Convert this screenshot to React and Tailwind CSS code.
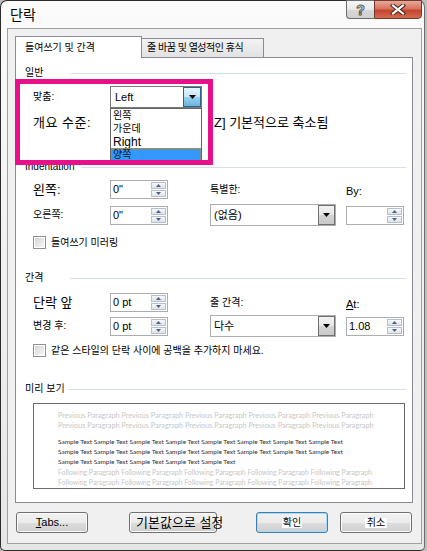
import React from "react";

const F = "font-['Liberation_Sans','Noto_Sans_CJK_KR',sans-serif]";

function TriDown({ color = "#000", w = 7, h = 4 }) {
  return (
    <svg width={w} height={h} viewBox="0 0 7 4">
      <path d="M0 0 L7 0 L3.5 4 Z" fill={color} />
    </svg>
  );
}
function TriUp({ color = "#4d6185" }) {
  return (
    <svg width="5" height="3" viewBox="0 0 5 3">
      <path d="M0 3 L5 3 L2.5 0 Z" fill={color} />
    </svg>
  );
}
function TriDn({ color = "#4d6185" }) {
  return (
    <svg width="5" height="3" viewBox="0 0 5 3">
      <path d="M0 0 L5 0 L2.5 3 Z" fill={color} />
    </svg>
  );
}

function SpinBox({ value, className = "" }) {
  return (
    <div className={`w-[58px] h-[19px] shrink-0 border border-[#abadb3] bg-white flex items-center ${className}`}>
      <span className="flex-1 pl-[2px] text-[11px] leading-none text-black whitespace-nowrap">{value}</span>
      <div className="w-[16px] h-full flex flex-col gap-px py-px pr-px">
        <div className="flex-1 border border-[#b7bfca] bg-linear-to-b from-[#f7f9fb] to-[#dde3ea] flex items-center justify-center">
          <TriUp />
        </div>
        <div className="flex-1 border border-[#b7bfca] bg-linear-to-b from-[#f7f9fb] to-[#dde3ea] flex items-center justify-center">
          <TriDn />
        </div>
      </div>
    </div>
  );
}

function Combo({ value }) {
  return (
    <div className="w-[126px] h-[22px] shrink-0 border border-[#abadb3] bg-white flex items-center">
      <span className="flex-1 pl-[3px] text-[11px] leading-none text-black whitespace-nowrap">{value}</span>
      <div className="w-[17px] h-[20px] border border-[#707070] bg-[linear-gradient(#f2f2f2_0%,#e6e6e6_50%,#d4d4d4_51%,#c9c9c9_100%)] flex items-center justify-center">
        <TriDown />
      </div>
    </div>
  );
}

function Check({ label }) {
  return (
    <div className="flex items-center h-[13px] pl-[17px]">
      <div className="w-[13px] h-[13px] border border-[#8f8f8f] bg-white p-px">
        <div className="w-full h-full bg-linear-to-br from-[#d6d6d6] to-[#f6f6f6]" />
      </div>
      <span className="ml-[5px] text-[10px] leading-none text-black whitespace-nowrap">{label}</span>
    </div>
  );
}

function Header({ label, labelClass = "w-[45px]", className = "" }) {
  return (
    <div className={`flex items-center h-[12px] pl-[9px] pr-[6px] ${className}`}>
      <span className={`text-[10px] leading-[12px] text-black whitespace-nowrap shrink-0 ${labelClass}`}>{label}</span>
      <div className="flex-1 h-px bg-[#d5dfe5]" />
    </div>
  );
}

function Btn({ children, className = "", def = false }) {
  return (
    <div
      className={`h-[21px] rounded-[3px] border ${
        def ? "border-[#3c7fb1] shadow-[inset_0_0_0_1px_#a6dcf7]" : "border-[#707070] shadow-[inset_0_0_0_1px_#fbfbfb]"
      } bg-[linear-gradient(#f2f2f2_0%,#ebebeb_50%,#dddddd_51%,#cfcfcf_100%)] flex items-center ${className}`}
    >
      {children}
    </div>
  );
}

const prev = "Previous Paragraph Previous Paragraph Previous Paragraph Previous Paragraph Previous Paragraph";
const s8 = "Sample Text Sample Text Sample Text Sample Text Sample Text Sample Text Sample Text Sample Text";
const s5 = "Sample Text Sample Text Sample Text Sample Text Sample Text";
const fol = "Following Paragraph Following Paragraph Following Paragraph Following Paragraph Following Paragraph";

export default function App() {
  return (
    <div className={`w-[427px] h-[551px] bg-[#bdbdbd] overflow-hidden ${F}`}>
      <div className="relative w-[425px] h-[551px] rounded-t-[7px] rounded-b-[5px] border border-[#2b2b2b] border-r-[#6b6b6b] bg-linear-to-b from-[#fbfbfb] to-[#e6e6e6] flex flex-col">
        {/* title bar */}
        <div className="h-[27px] flex items-start shrink-0">
          <span className="ml-[9px] mt-[6px] text-[14px] leading-[16px] text-black">단락</span>
          <div className="ml-auto mr-[2px] -mt-px flex">
            <div className="w-[28px] h-[19px] rounded-bl-[4px] border border-[#6d6d6d] border-r-0 bg-[linear-gradient(#f6f6f6_0%,#e8e8e8_50%,#d8d8d8_51%,#cfcfcf_100%)] flex items-center justify-center">
              <span className="text-[14px] leading-none font-bold text-white [-webkit-text-stroke:1px_#5a5a5a]">?</span>
            </div>
            <div className="w-[48px] h-[19px] rounded-br-[4px] border border-[#6d3a30] bg-[linear-gradient(#e9a999_0%,#d8735f_45%,#c5452f_55%,#d36a4f_100%)] flex items-center justify-center">
              <svg width="16" height="11" viewBox="0 0 16 11">
                <path d="M3 1.5 L13 9.5 M13 1.5 L3 9.5" stroke="#4a2820" strokeWidth="4.2" strokeLinecap="square" />
                <path d="M3 1.5 L13 9.5 M13 1.5 L3 9.5" stroke="#ffffff" strokeWidth="2.2" strokeLinecap="square" />
              </svg>
            </div>
          </div>
        </div>

        {/* client area */}
        <div className="ml-[6px] w-[415px] h-[516px] border border-[#a0a0a0] bg-[#f0f0f0] pt-[7px] pl-[7px] flex flex-col">
          {/* tabs */}
          <div className="flex items-end h-[21px] relative z-10">
            <div className="w-[127px] h-[22px] -mb-px border border-b-0 border-[#898c95] bg-white flex items-center pl-[9px]">
              <span className="text-[10px] leading-none text-black whitespace-nowrap">들여쓰기 및 간격</span>
            </div>
            <div className="w-[122px] h-[19px] border-t border-r border-[#898c95] bg-linear-to-b from-[#f3f3f3] to-[#e2e2e2] flex items-center pl-[5px]">
              <span className="text-[10px] leading-none text-black whitespace-nowrap tracking-[-0.5px]">줄 바꿈 및 열성적인 휴식</span>
            </div>
          </div>

          {/* panel */}
          <div className="relative w-[398px] h-[446px] border border-[#898c95] bg-white flex flex-col">
            <Header label="일반" className="mt-[9px]" />

            {/* alignment row */}
            <div className="flex items-center h-[22px] mt-[7px] pl-[17px]">
              <span className="w-[77px] text-[10px] leading-none text-black">맞춤:</span>
              <div className="w-[92px] h-[22px] border border-[#7a7a7a] bg-white flex items-center">
                <span className="flex-1 pl-[4px] text-[11px] leading-none text-black">Left</span>
                <div className="w-[18px] h-[20px] border border-[#2c628b] bg-[linear-gradient(#e5f4fc_0%,#c4e5f6_50%,#98d1ef_51%,#6ab4dc_100%)] flex items-center justify-center">
                  <TriDown />
                </div>
              </div>
            </div>

            {/* outline row */}
            <div className="flex items-center h-[22px] mt-[3px] pl-[17px]">
              <span className="w-[77px] text-[13px] leading-none text-black whitespace-nowrap tracking-[0.5px]">개요 수준:</span>
              <span className="ml-[104px] text-[13px] leading-none text-black whitespace-nowrap">Z] 기본적으로 축소됨</span>
            </div>

            <Header label="Indentation" labelClass="pr-[6px]" className="mt-[28px]" />

            {/* indent row 1 */}
            <div className="flex items-center h-[19px] mt-[7px] pl-[17px]">
              <span className="w-[77px] text-[13px] leading-none text-black">왼쪽:</span>
              <SpinBox value={'0"'} />
              <span className="ml-[42px] w-[126px] text-[10px] leading-none text-black">특별한:</span>
              <span className="ml-[10px] mt-[3px] text-[11px] leading-none text-black">By:</span>
            </div>

            {/* indent row 2 */}
            <div className="flex items-center h-[22px] mt-[5px] pl-[17px]">
              <span className="w-[77px] text-[10px] leading-none text-black">오른쪽:</span>
              <SpinBox value={'0"'} />
              <div className="ml-[42px]">
                <Combo value="(없음)" />
              </div>
              <SpinBox value="" className="ml-[10px]" />
            </div>

            <div className="mt-[10px]">
              <Check label="들여쓰기 미러링" />
            </div>

            <Header label="간격" className="mt-[23px]" />

            {/* spacing row 1 */}
            <div className="flex items-center h-[19px] mt-[9px] pl-[17px]">
              <span className="w-[77px] text-[13px] leading-none text-black">단락 앞</span>
              <SpinBox value="0 pt" />
              <span className="ml-[42px] w-[126px] text-[10px] leading-none text-black">줄 간격:</span>
              <span className="ml-[10px] mt-[3px] text-[11px] leading-none text-black">
                <span className="underline">A</span>t:
              </span>
            </div>

            {/* spacing row 2 */}
            <div className="flex items-center h-[22px] mt-[3px] pl-[17px]">
              <span className="w-[77px] text-[10px] leading-none text-black">변경 후:</span>
              <SpinBox value="0 pt" />
              <div className="ml-[42px]">
                <Combo value="다수" />
              </div>
              <SpinBox value="1.08" className="ml-[10px]" />
            </div>

            <div className="mt-[7px]">
              <Check label="같은 스타일의 단락 사이에 공백을 추가하지 마세요." />
            </div>

            <Header label="미리 보기" labelClass="w-[43px]" className="mt-[26px]" />

            {/* preview */}
            <div className="ml-[17px] mt-[8px] w-[372px] h-[86px] overflow-hidden border border-[#6b6b6b] bg-white pt-[7px] pl-[24px] font-['Lato',sans-serif] leading-[10px] whitespace-nowrap">
              <div className="text-[7.3px] text-[#c6c6c6]">{prev}</div>
              <div className="text-[7.3px] text-[#c6c6c6]">{prev}</div>
              <div className="mt-[6px] text-[6.5px] text-[#303030]">{s8}</div>
              <div className="text-[6.5px] text-[#303030]">{s8}</div>
              <div className="text-[6.5px] text-[#303030]">{s5}</div>
              <div className="text-[6.9px] text-[#c6c6c6]">{fol}</div>
              <div className="text-[6.9px] text-[#c6c6c6]">{fol}</div>
            </div>

            {/* open dropdown list overlay */}
            <div className="absolute left-[94px] top-[50px] z-20 w-[92px] h-[54px] border border-[#646464] bg-white flex flex-col">
              <div className="h-[13px] pl-[2px] flex items-center text-[10px] leading-none text-black">왼쪽</div>
              <div className="h-[13px] pl-[2px] flex items-center text-[10px] leading-none text-black">가운데</div>
              <div className="h-[13px] pl-[2px] flex items-center text-[12px] leading-none text-black">Right</div>
              <div className="h-[13px] pl-[2px] flex items-center text-[10px] leading-none text-[#101820] bg-[#3399ff] outline outline-1 outline-dotted outline-[#c88a2a] -outline-offset-1">양쪽</div>
            </div>

            {/* magenta annotation box */}
            <div className="absolute -left-px top-[21px] z-30 w-[198px] h-[86px] border-[5px] border-[#e8108a]" />
          </div>

          {/* bottom buttons */}
          <div className="flex items-center mt-[9px] pl-[1px]">
            <Btn className="w-[72px] justify-center">
              <span className="text-[11px] leading-none text-black">
                <span className="underline">T</span>abs...
              </span>
            </Btn>
            <Btn className="w-[88px] ml-[41px] pl-[6px]">
              <span className="text-[13px] leading-none text-black whitespace-nowrap">기본값으로 설정</span>
            </Btn>
            <Btn def className="w-[72px] ml-[39px] justify-center">
              <span className="text-[10px] leading-none text-black bg-white px-px">확인</span>
            </Btn>
            <Btn className="w-[72px] ml-[12px] justify-center">
              <span className="text-[10px] leading-none text-black bg-white px-[2px]">취소</span>
            </Btn>
          </div>
        </div>
      </div>
    </div>
  );
}
